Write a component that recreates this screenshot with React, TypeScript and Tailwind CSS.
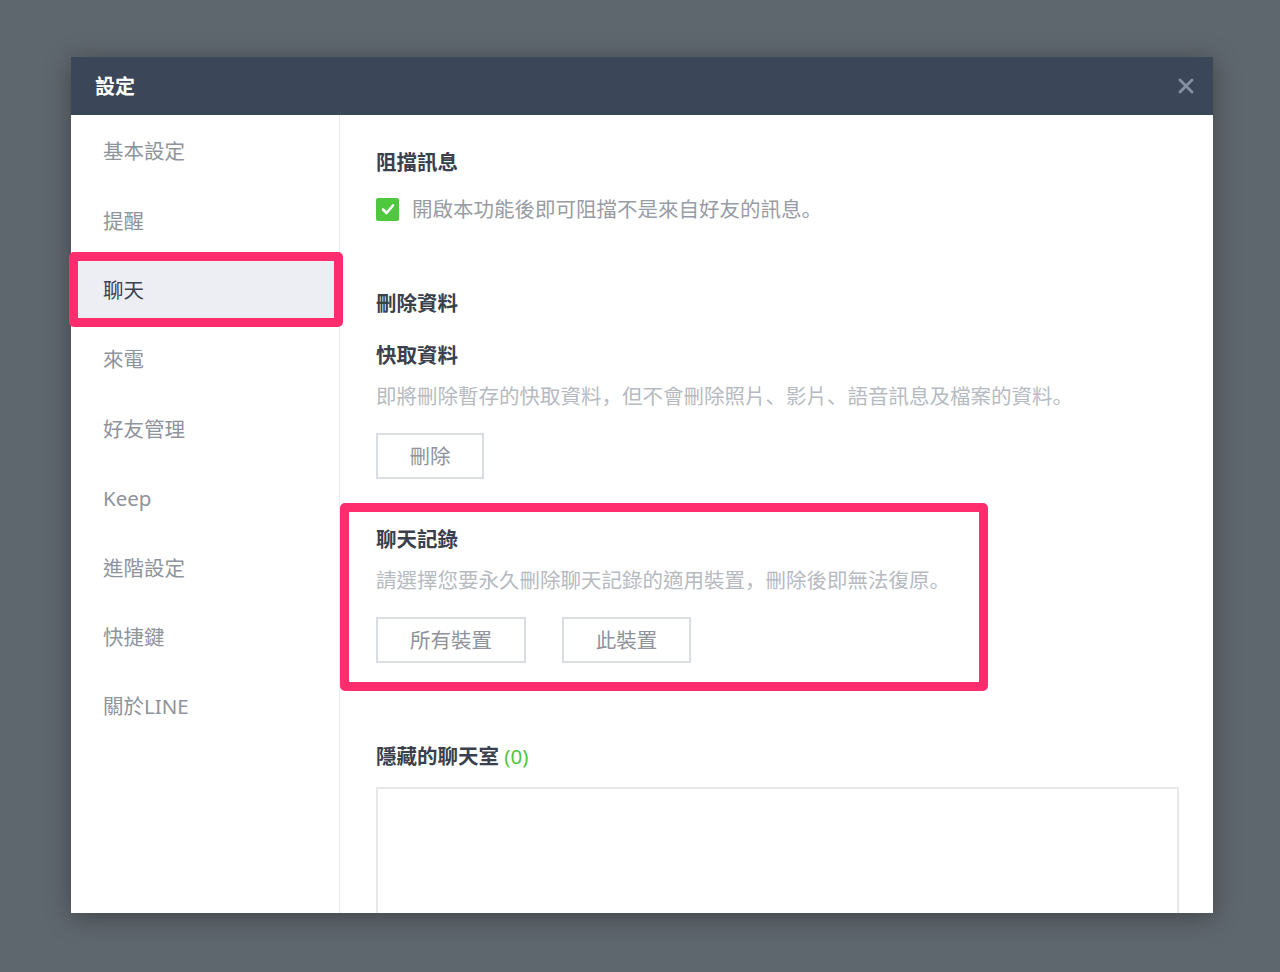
import React from "react";

const items = ["基本設定", "提醒", "聊天", "來電", "好友管理", "Keep", "進階設定", "快捷鍵", "關於LINE"];

const P = ({ c }: { c: string }) => (
  <span style={{ fontFamily: '"Noto Sans CJK SC", sans-serif' }}>{c}</span>
);

export default function App() {
  return (
    <div
      className="w-[1280px] h-[972px] bg-[#5f676e] pt-[57px] pl-[71px] overflow-hidden"
      style={{ fontFamily: '"Noto Sans", "Noto Sans CJK TC", sans-serif' }}
    >
      <div className="w-[1142px] h-[856px] bg-white flex flex-col shadow-[0_4px_24px_rgba(0,0,0,0.35)]">
        <div className="h-[58px] bg-[#3b4659] flex items-center justify-between pl-[24px] pr-[19px] shrink-0">
          <span className="text-white text-[20px] font-bold leading-none mt-[2px]">設定</span>
          <svg width="16" height="16" viewBox="0 0 16 16">
            <path d="M2 2 L14 14 M14 2 L2 14" stroke="#8791a2" strokeWidth="2.8" strokeLinecap="round" />
          </svg>
        </div>
        <div className="flex flex-1 min-h-0">
          <div className="w-[269px] border-r border-[#e8eaee] pt-[2px] shrink-0 relative">
            {items.map((it) => {
              const sel = it === "聊天";
              return (
                <div
                  key={it}
                  className={`h-[69.4px] flex items-center pl-[32px] text-[20.5px] ${
                    sel ? "bg-[#eceef4] text-[#3c4250] relative" : "text-[#8e939c]"
                  }`}
                >
                  {it}
                  {sel && (
                    <div className="absolute left-[-2px] right-[-4px] top-[-4px] bottom-[-2px] border-[9px] border-[#ff2d6e] rounded-[5px]" />
                  )}
                </div>
              );
            })}
          </div>
          <div className="flex-1 pl-[36px] pr-[34px] pt-[33px] flex flex-col overflow-hidden">
            <div className="text-[20.5px] leading-[28px] font-bold text-[#3a404c]">阻擋訊息</div>
            <div className="mt-[19px] flex items-center h-[28px]">
              <div className="w-[23px] h-[23px] rounded-[2px] bg-[#4fc83f] flex items-center justify-center">
                <svg width="16" height="16" viewBox="0 0 16 16">
                  <path d="M3 8.5 L6.5 12 L13 4.5" stroke="white" strokeWidth="2.6" fill="none" strokeLinecap="round" strokeLinejoin="round" />
                </svg>
              </div>
              <span className="ml-[13px] text-[20.5px] text-[#979ca6]">
                開啟本功能後即可阻擋不是來自好友的訊息<P c="。" />
              </span>
            </div>

            <div className="mt-[66px] text-[20.5px] leading-[28px] font-bold text-[#3a404c]">刪除資料</div>
            <div className="mt-[24px] text-[20.5px] leading-[28px] font-bold text-[#3a404c]">快取資料</div>
            <div className="mt-[12px] text-[20.5px] leading-[28px] text-[#b6bac1]">
              即將刪除暫存的快取資料<P c="，" />但不會刪除照片<P c="、" />影片<P c="、" />語音訊息及檔案的資料<P c="。" />
            </div>
            <div className="mt-[23px]">
              <button className="w-[108px] h-[46px] border-2 border-[#dadee4] text-[20.5px] text-[#8e939c]">刪除</button>
            </div>

            <div className="mt-[46px] relative">
              <div className="text-[20.5px] leading-[28px] font-bold text-[#3a404c]">聊天記錄</div>
              <div className="mt-[12px] text-[20.5px] leading-[28px] text-[#b6bac1]">
                請選擇您要永久刪除聊天記錄的適用裝置<P c="，" />刪除後即無法復原<P c="。" />
              </div>
              <div className="mt-[23px] flex gap-[36px]">
                <button className="w-[150px] h-[46px] border-2 border-[#dadee4] text-[20.5px] text-[#8e939c]">所有裝置</button>
                <button className="w-[129px] h-[46px] border-2 border-[#dadee4] text-[20.5px] text-[#8e939c]">此裝置</button>
              </div>
              <div className="absolute left-[-36px] top-[-22px] bottom-[-28px] w-[648px] border-[9px] border-[#ff2d6e] rounded-[5px]" />
            </div>

            <div className="mt-[79px] text-[20.5px] leading-[28px] font-bold text-[#3a404c]">
              隱藏的聊天室 <span className="font-normal text-[#4cc83e]">(0)</span>
            </div>
            <div className="mt-[17px] h-[200px] border-2 border-[#e8e8e8] shrink-0"></div>
          </div>
        </div>
      </div>
    </div>
  );
}
